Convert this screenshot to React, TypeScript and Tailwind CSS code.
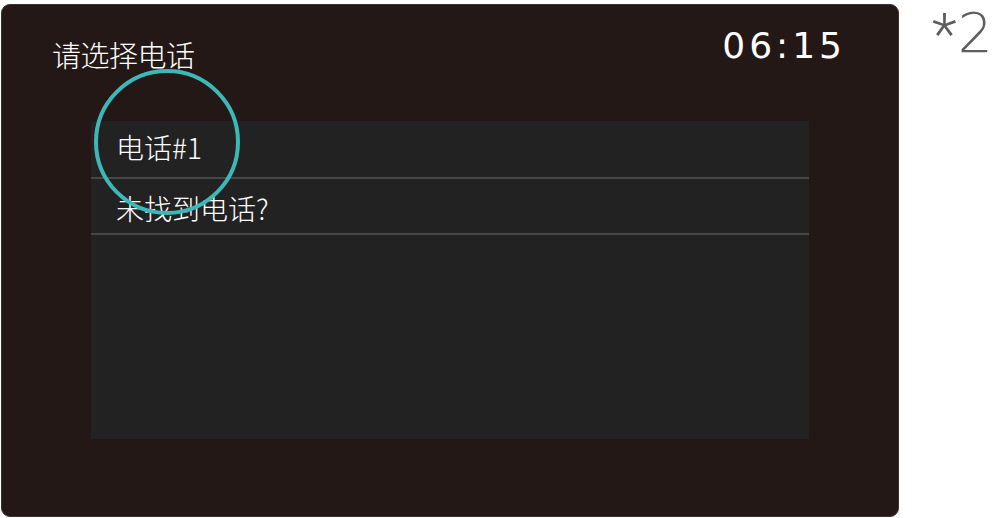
import React from "react";

const rows = ["电话#1", "未找到电话?"];

const App: React.FC = () => {
  return (
    <div className="w-[1000px] h-[518px] bg-white flex items-start overflow-hidden">
      <div className="relative shrink-0 mt-[4px] ml-[1px] w-[898px] h-[513px] rounded-[9px] bg-[#231816] border border-[#3a3230] flex flex-col">
        <div className="h-[116px] flex justify-between items-start pl-[50px] pr-[52px]">
          <h1
            className="mt-[35px] text-[29px] leading-[29px] font-light text-white tracking-[-0.5px]"
            style={{ fontFamily: '"Noto Sans CJK SC", "Noto Sans", sans-serif' }}
          >
            请选择电话
          </h1>
          <span
            className="mt-[23px] text-[36px] leading-[36px] font-normal text-white tracking-[4px]"
            style={{ fontFamily: '"DejaVu Sans", Roboto, sans-serif' }}
          >
            06:15
          </span>
        </div>

        <div className="ml-[89px] w-[718px] h-[318px] bg-[#222222]">
          {rows.map((label, i) => (
            <div
              key={label}
              className={`flex items-center pl-[25px] border-b-2 border-[#474747] ${
                i === 0 ? "h-[58px] pb-[4px]" : "h-[56px] pt-[4px]"
              }`}
            >
              <span
                className="text-[28px] leading-[28px] font-light text-white"
                style={{ fontFamily: '"Noto Sans CJK SC", "Noto Sans", sans-serif' }}
              >
                {label}
              </span>
            </div>
          ))}
        </div>

        {/* highlight ring */}
        <div className="absolute left-[92px] top-[64px] w-[146px] h-[146px] rounded-full border-[4.5px] border-[#3cb9b6]" />
      </div>

      <div className="shrink-0 ml-[33px] flex items-start text-[#5e5e5e] whitespace-nowrap">
        <span
          className="text-[58px] leading-[68px] font-light"
          style={{ fontFamily: 'Roboto, sans-serif' }}
        >
          *
        </span>
        <span
          className="ml-[1px] mt-[1px] text-[55px] leading-[64px] font-extralight"
          style={{ fontFamily: '"DejaVu Sans", Roboto, sans-serif' }}
        >
          2
        </span>
      </div>
    </div>
  );
};

export default App;
